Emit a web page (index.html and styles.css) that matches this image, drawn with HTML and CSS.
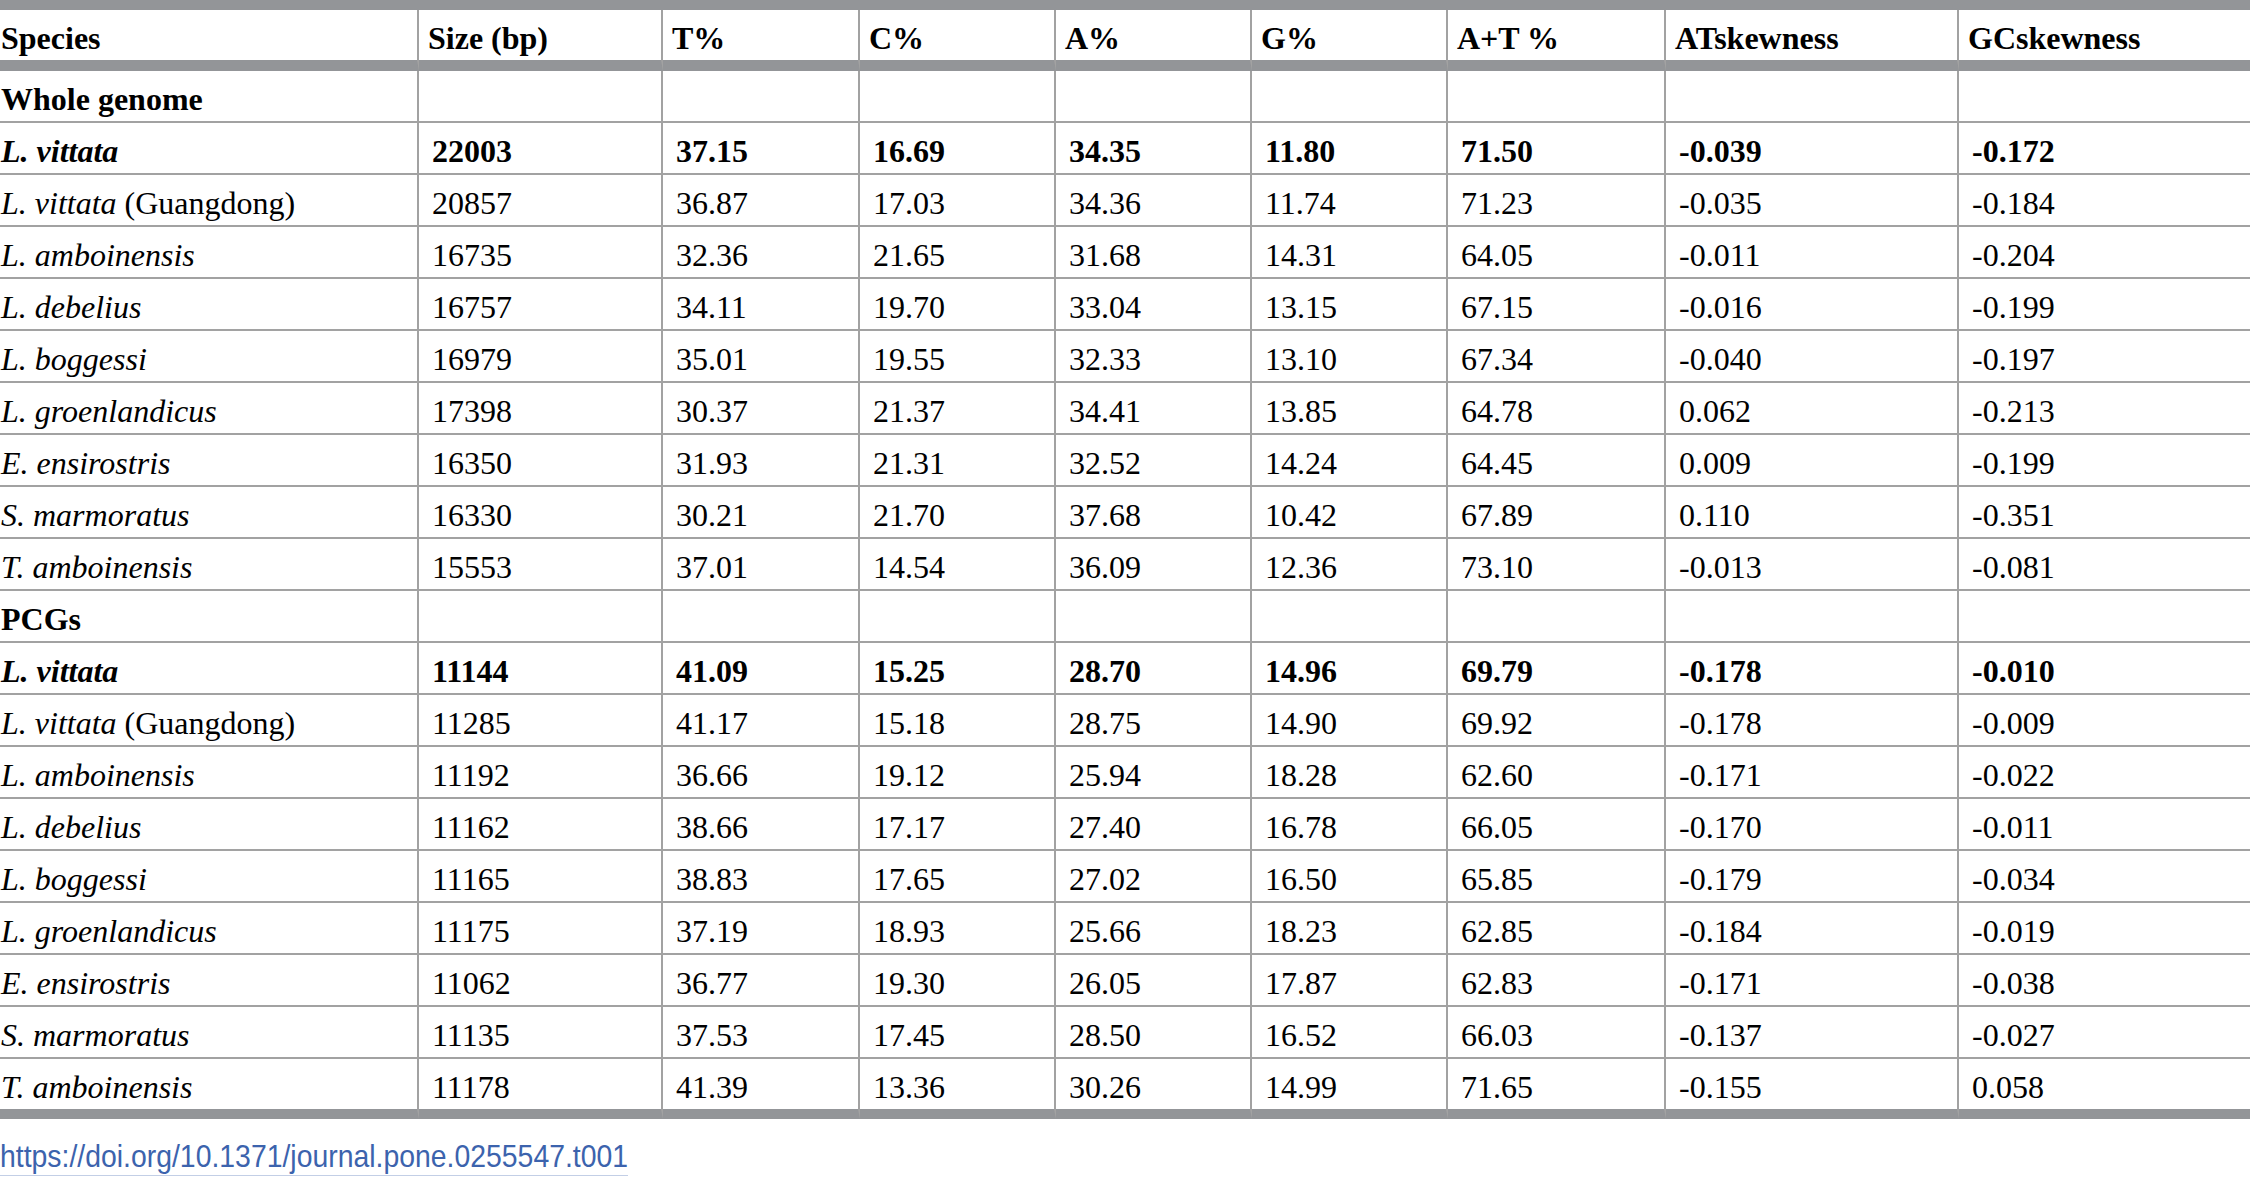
FILE: index.html
```html
<!DOCTYPE html>
<html lang="en">
<head>
<meta charset="utf-8">
<title>Table 1</title>
<link rel="stylesheet" href="styles.css">
</head>
<body>
<table class="data">
  <colgroup>
    <col class="w-species"><col class="w-size"><col class="w-pct"><col class="w-pct2"><col class="w-pct2"><col class="w-pct2"><col class="w-at"><col class="w-skew"><col class="w-last">
  </colgroup>
  <thead>
    <tr><th>Species</th><th>Size (bp)</th><th>T%</th><th>C%</th><th>A%</th><th>G%</th><th>A+T %</th><th>ATskewness</th><th>GCskewness</th></tr>
  </thead>
  <tbody>
    <tr class="section"><td>Whole genome</td><td></td><td></td><td></td><td></td><td></td><td></td><td></td><td></td></tr>
    <tr class="hl"><td><i>L. vittata</i></td><td>22003</td><td>37.15</td><td>16.69</td><td>34.35</td><td>11.80</td><td>71.50</td><td>-0.039</td><td>-0.172</td></tr>
    <tr><td><i>L. vittata</i> (Guangdong)</td><td>20857</td><td>36.87</td><td>17.03</td><td>34.36</td><td>11.74</td><td>71.23</td><td>-0.035</td><td>-0.184</td></tr>
    <tr><td><i>L. amboinensis</i></td><td>16735</td><td>32.36</td><td>21.65</td><td>31.68</td><td>14.31</td><td>64.05</td><td>-0.011</td><td>-0.204</td></tr>
    <tr><td><i>L. debelius</i></td><td>16757</td><td>34.11</td><td>19.70</td><td>33.04</td><td>13.15</td><td>67.15</td><td>-0.016</td><td>-0.199</td></tr>
    <tr><td><i>L. boggessi</i></td><td>16979</td><td>35.01</td><td>19.55</td><td>32.33</td><td>13.10</td><td>67.34</td><td>-0.040</td><td>-0.197</td></tr>
    <tr><td><i>L. groenlandicus</i></td><td>17398</td><td>30.37</td><td>21.37</td><td>34.41</td><td>13.85</td><td>64.78</td><td>0.062</td><td>-0.213</td></tr>
    <tr><td><i>E. ensirostris</i></td><td>16350</td><td>31.93</td><td>21.31</td><td>32.52</td><td>14.24</td><td>64.45</td><td>0.009</td><td>-0.199</td></tr>
    <tr><td><i>S. marmoratus</i></td><td>16330</td><td>30.21</td><td>21.70</td><td>37.68</td><td>10.42</td><td>67.89</td><td>0.110</td><td>-0.351</td></tr>
    <tr><td><i>T. amboinensis</i></td><td>15553</td><td>37.01</td><td>14.54</td><td>36.09</td><td>12.36</td><td>73.10</td><td>-0.013</td><td>-0.081</td></tr>
    <tr class="section"><td>PCGs</td><td></td><td></td><td></td><td></td><td></td><td></td><td></td><td></td></tr>
    <tr class="hl"><td><i>L. vittata</i></td><td>11144</td><td>41.09</td><td>15.25</td><td>28.70</td><td>14.96</td><td>69.79</td><td>-0.178</td><td>-0.010</td></tr>
    <tr><td><i>L. vittata</i> (Guangdong)</td><td>11285</td><td>41.17</td><td>15.18</td><td>28.75</td><td>14.90</td><td>69.92</td><td>-0.178</td><td>-0.009</td></tr>
    <tr><td><i>L. amboinensis</i></td><td>11192</td><td>36.66</td><td>19.12</td><td>25.94</td><td>18.28</td><td>62.60</td><td>-0.171</td><td>-0.022</td></tr>
    <tr><td><i>L. debelius</i></td><td>11162</td><td>38.66</td><td>17.17</td><td>27.40</td><td>16.78</td><td>66.05</td><td>-0.170</td><td>-0.011</td></tr>
    <tr><td><i>L. boggessi</i></td><td>11165</td><td>38.83</td><td>17.65</td><td>27.02</td><td>16.50</td><td>65.85</td><td>-0.179</td><td>-0.034</td></tr>
    <tr><td><i>L. groenlandicus</i></td><td>11175</td><td>37.19</td><td>18.93</td><td>25.66</td><td>18.23</td><td>62.85</td><td>-0.184</td><td>-0.019</td></tr>
    <tr><td><i>E. ensirostris</i></td><td>11062</td><td>36.77</td><td>19.30</td><td>26.05</td><td>17.87</td><td>62.83</td><td>-0.171</td><td>-0.038</td></tr>
    <tr><td><i>S. marmoratus</i></td><td>11135</td><td>37.53</td><td>17.45</td><td>28.50</td><td>16.52</td><td>66.03</td><td>-0.137</td><td>-0.027</td></tr>
    <tr class="last"><td><i>T. amboinensis</i></td><td>11178</td><td>41.39</td><td>13.36</td><td>30.26</td><td>14.99</td><td>71.65</td><td>-0.155</td><td>0.058</td></tr>
  </tbody>
</table>
<p class="doi"><a class="doi-link" href="https://doi.org/10.1371/journal.pone.0255547.t001">https://doi.org/10.1371/journal.pone.0255547.t001</a></p>
</body>
</html>
```

FILE: styles.css
```css
html, body {
  margin: 0;
  padding: 0;
  background: #ffffff;
}

body {
  font-family: "Liberation Serif", "Times New Roman", serif;
  color: #000000;
}

.data {
  width: 2250px;
  table-layout: fixed;
  border-collapse: separate;
  border-spacing: 0;
  border-top: 10px solid #939598;
}

.w-species { width: 419px; }
.w-size { width: 244px; }
.w-pct { width: 197px; }
.w-pct2 { width: 196px; }
.w-at { width: 218px; }
.w-skew { width: 293px; }
.w-last { width: 291px; }

.data th,
.data td {
  font-size: 32px;
  line-height: 44px;
  padding: 6px 0 0 13px;
  text-align: left;
  vertical-align: top;
  white-space: nowrap;
  overflow: hidden;
  border-right: 2px solid #a2a2a2;
  border-bottom: 2px solid #a2a2a2;
}

.data th {
  font-weight: bold;
  padding-left: 9px;
  border-bottom: 11px solid #939598;
}

.data th:first-child,
.data td:first-child {
  padding-left: 1px;
}

.data th:last-child,
.data td:last-child {
  border-right: none;
}

.data .section td,
.data .hl td {
  font-weight: bold;
}

.data .last td {
  border-bottom: 10px solid #939598;
}

.doi {
  margin: 19px 0 0 0;
  font-family: "Liberation Sans", Arial, sans-serif;
  font-size: 32px;
  line-height: normal;
}

.doi-link {
  display: inline-block;
  color: #3c63ad;
  text-decoration: none;
  border-bottom: 1px solid #c3cfe6;
  transform: scaleX(0.887);
  transform-origin: left top;
}
```
